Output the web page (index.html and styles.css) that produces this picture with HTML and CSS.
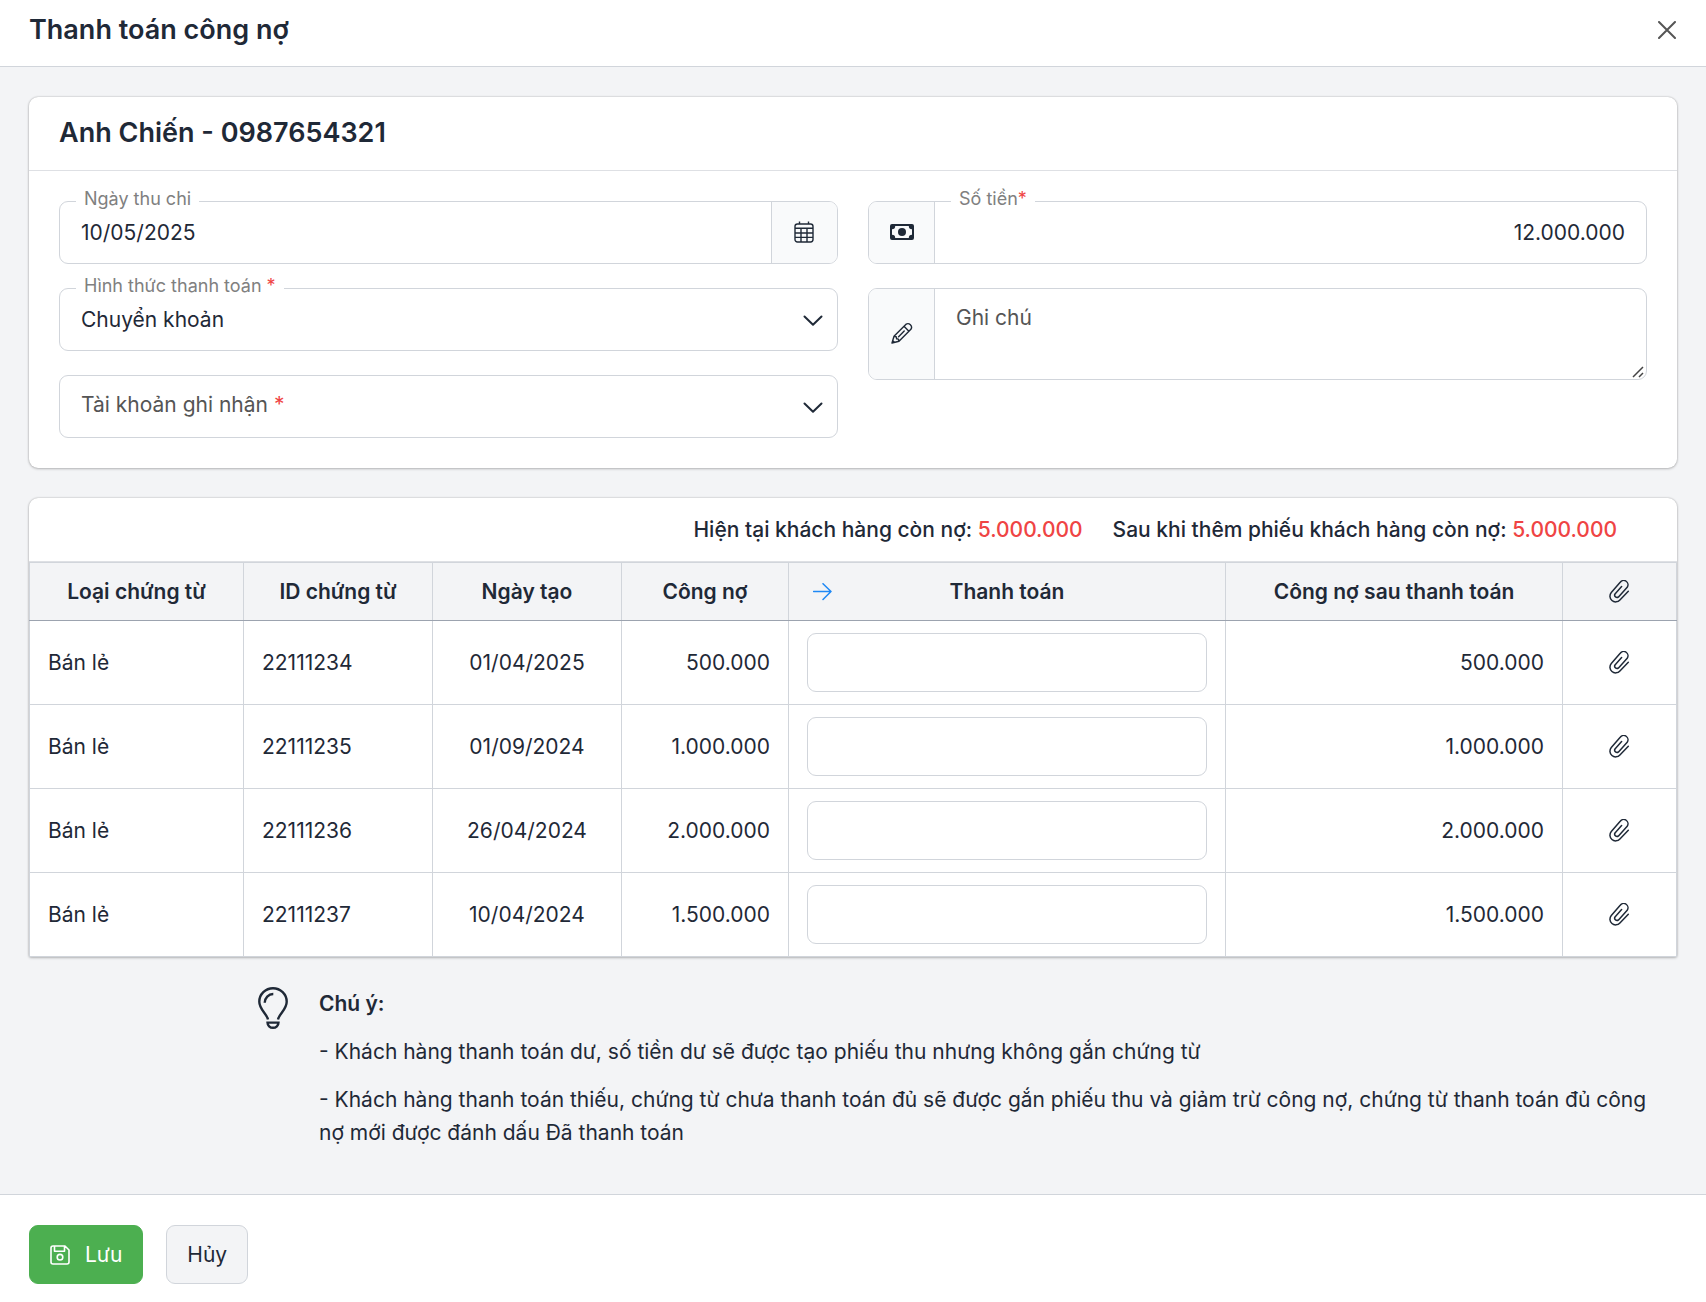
FILE: index.html
```html
<!DOCTYPE html>
<html lang="vi">
<head>
<meta charset="utf-8">
<meta name="viewport" content="width=device-width, initial-scale=1">
<title>Thanh toán công nợ</title>
<link rel="stylesheet" href="styles.css">
</head>
<body>
<svg class="sprite" aria-hidden="true">
  <symbol id="clip" viewBox="1 1 24 24">
    <path d="M21.3 12.3 12.9 20.9A5.6 5.6 0 0 1 4.3 13.6L13.2 3.3A4.1 4.1 0 0 1 20.2 8.2L11.5 17.9A2.3 2.3 0 0 1 8 15L14.6 7.6" fill="none" stroke="currentColor" stroke-width="1.5" stroke-linecap="round" stroke-linejoin="round"/>
  </symbol>
</svg>

<header class="topbar">
  <h1 class="topbar-title">Thanh toán công nợ</h1>
  <button class="icon-button close" type="button" aria-label="Đóng">
    <svg width="18" height="18" viewBox="0 0 18 18"><path d="M1 1 17 17M17 1 1 17" fill="none" stroke="currentColor" stroke-width="2" stroke-linecap="round"/></svg>
  </button>
</header>

<main class="content">
  <section class="card">
    <h2 class="card-title">Anh Chiến - 0987654321</h2>
    <div class="form">
      <div class="form-column">
        <div class="field">
          <label class="float-label" for="date">Ngày thu chi</label>
          <input class="control" id="date" type="text" value="10/05/2025">
          <button class="addon addon-end" type="button" aria-label="Chọn ngày">
            <svg width="20" height="22" viewBox="0 0 20 22" fill="none" stroke="currentColor" stroke-width="1.4"><rect x="1" y="3" width="18" height="18" rx="2.4"/><path d="M5.5 .4V3M14.5 .4V3M1 7.3H19M1 12H19M1 16.4H19M7 7.3V21M13 7.3V21"/></svg>
          </button>
        </div>
        <div class="field">
          <label class="float-label" for="method">Hình thức thanh toán <span class="required">*</span></label>
          <select class="control" id="method"><option>Chuyển khoản</option></select>
          <svg class="chevron" width="20" height="12" viewBox="0 0 20 12"><path d="M1.5 1.5 10 9.8 18.5 1.5" fill="none" stroke="currentColor" stroke-width="2" stroke-linecap="round" stroke-linejoin="round"/></svg>
        </div>
        <div class="field">
          <label class="inner-label" for="account">Tài khoản ghi nhận <span class="required">*</span></label>
          <select class="control" id="account"><option></option></select>
          <svg class="chevron" width="20" height="12" viewBox="0 0 20 12"><path d="M1.5 1.5 10 9.8 18.5 1.5" fill="none" stroke="currentColor" stroke-width="2" stroke-linecap="round" stroke-linejoin="round"/></svg>
        </div>
      </div>
      <div class="form-column">
        <div class="field">
          <span class="addon addon-start">
            <svg width="24" height="16" viewBox="0 0 24 16"><path fill="currentColor" fill-rule="evenodd" d="M2 0H22A2 2 0 0 1 24 2V14A2 2 0 0 1 22 16H2A2 2 0 0 1 0 14V2A2 2 0 0 1 2 0ZM5.2 2A3.2 3.2 0 0 1 2 5.2V10.8A3.2 3.2 0 0 1 5.2 14H18.8A3.2 3.2 0 0 1 22 10.8V5.2A3.2 3.2 0 0 1 18.8 2Z"/><circle cx="12" cy="8" r="4" fill="currentColor"/></svg>
          </span>
          <div class="field-main">
            <label class="float-label" for="amount">Số tiền<span class="required">*</span></label>
            <input class="control number" id="amount" type="text" value="12.000.000">
          </div>
        </div>
        <div class="field">
          <span class="addon addon-start">
            <svg width="22" height="22" viewBox="0 0 22 22" fill="none" stroke="currentColor" stroke-width="1.4" stroke-linejoin="round" stroke-linecap="round"><path d="M1 21 3 14.2 14.8 2.4A3.6 3.6 0 0 1 19.9 7.3L8 19.2ZM3 14.2 5.4 15 5.6 16.8 7.4 17.1 8 19.2M13 4.3 17.9 9.2M7.6 14.7 13.2 9.1M1 21 1.8 18.6 3.3 20.3Z"/></svg>
          </span>
          <textarea class="control note-input" placeholder="Ghi chú" aria-label="Ghi chú"></textarea>
          <svg class="grip" width="12" height="12" viewBox="0 0 12 12"><path d="M1 11 11 1M7 11 11 7" fill="none" stroke="#444" stroke-width="1.5"/></svg>
        </div>
      </div>
    </div>
  </section>

  <section class="card card-table">
    <div class="summary">
      <span>Hiện tại khách hàng còn nợ: <span class="debt">5.000.000</span></span>
      <span>Sau khi thêm phiếu khách hàng còn nợ: <span class="debt">5.000.000</span></span>
    </div>
    <table class="documents">
      <colgroup><col class="col-type"><col class="col-id"><col class="col-id"><col class="col-debt"><col class="col-pay"><col class="col-rest"><col class="col-file"></colgroup>
      <thead>
        <tr>
          <th>Loại chứng từ</th>
          <th>ID chứng từ</th>
          <th>Ngày tạo</th>
          <th>Công nợ</th>
          <th>
            <div class="pay-head">
              <button class="icon-button fill" type="button" aria-label="Điền tất cả">
                <svg width="20" height="18" viewBox="1 1 20 18"><path d="M1.5 9.500H19M11 1.700 19 9.500 11 17.500" fill="none" stroke="currentColor" stroke-width="1.5" stroke-linecap="round" stroke-linejoin="round"/></svg>
              </button>
              <span>Thanh toán</span>
            </div>
          </th>
          <th>Công nợ sau thanh toán</th>
          <th><svg class="clip" role="img" aria-label="Đính kèm"><use href="#clip"/></svg></th>
        </tr>
      </thead>
      <tbody>
        <tr>
          <td>Bán lẻ</td><td>22111234</td><td class="center">01/04/2025</td><td class="number">500.000</td>
          <td><input class="pay-input" type="text" aria-label="Thanh toán 22111234"></td>
          <td class="number">500.000</td>
          <td><button class="icon-button attach" type="button" aria-label="Đính kèm 22111234"><svg class="clip"><use href="#clip"/></svg></button></td>
        </tr>
        <tr>
          <td>Bán lẻ</td><td>22111235</td><td class="center">01/09/2024</td><td class="number">1.000.000</td>
          <td><input class="pay-input" type="text" aria-label="Thanh toán 22111235"></td>
          <td class="number">1.000.000</td>
          <td><button class="icon-button attach" type="button" aria-label="Đính kèm 22111235"><svg class="clip"><use href="#clip"/></svg></button></td>
        </tr>
        <tr>
          <td>Bán lẻ</td><td>22111236</td><td class="center">26/04/2024</td><td class="number">2.000.000</td>
          <td><input class="pay-input" type="text" aria-label="Thanh toán 22111236"></td>
          <td class="number">2.000.000</td>
          <td><button class="icon-button attach" type="button" aria-label="Đính kèm 22111236"><svg class="clip"><use href="#clip"/></svg></button></td>
        </tr>
        <tr>
          <td>Bán lẻ</td><td>22111237</td><td class="center">10/04/2024</td><td class="number">1.500.000</td>
          <td><input class="pay-input" type="text" aria-label="Thanh toán 22111237"></td>
          <td class="number">1.500.000</td>
          <td><button class="icon-button attach" type="button" aria-label="Đính kèm 22111237"><svg class="clip"><use href="#clip"/></svg></button></td>
        </tr>
      </tbody>
    </table>
  </section>

  <aside class="hint">
    <svg class="hint-icon" width="30" height="42" viewBox="0 0 30 42" fill="none" stroke="currentColor" stroke-width="2.4"><path d="M10 32.5C8.8 26.5 1.3 22.5 1.3 14.7A13.7 13.4 0 0 1 28.7 14.7C28.7 22.5 21.2 26.5 20 32.5M6.7 15.8A8.5 8.8 0 0 1 15.3 7M9.5 35.6H20.5A5.5 5.2 0 0 1 9.5 35.6Z"/></svg>
    <div class="hint-text">
      <p class="hint-title">Chú ý:</p>
      <p>- Khách hàng thanh toán dư, số tiền dư sẽ được tạo phiếu thu nhưng không gắn chứng từ</p>
      <p>- Khách hàng thanh toán thiếu, chứng từ chưa thanh toán đủ sẽ được gắn phiếu thu và giảm trừ công nợ, chứng từ thanh toán đủ công nợ mới được đánh dấu Đã thanh toán</p>
    </div>
  </aside>
</main>

<footer class="actions">
  <button class="button button-save" type="button">
    <svg width="20" height="20" viewBox="0 0 20 20" fill="none" stroke="currentColor" stroke-width="1.6" stroke-linejoin="round"><path d="M3 1H15L19 5V17A2 2 0 0 1 17 19H3A2 2 0 0 1 1 17V3A2 2 0 0 1 3 1ZM4.5 1V6.2H14.5V1"/><circle cx="10" cy="12.2" r="2.8"/></svg>
    Lưu
  </button>
  <button class="button button-cancel" type="button">Hủy</button>
</footer>
</body>
</html>
```
FILE: styles.css
```css
:root {
  --text: #1f2937;
  --line: #d1d5db;
  --surface: #f3f4f6;
  --danger: #ef4444;
}

* { box-sizing: border-box; }

body {
  margin: 0;
  background: #fff;
  color: var(--text);
  font: 400 21px/33px Inter, "Noto Sans", sans-serif;
}

h1, h2, p { margin: 0; }

button, input, select, textarea {
  font: inherit;
  color: inherit;
}

svg { display: block; flex: none; }

.sprite { display: none; }

.icon-button {
  display: flex;
  padding: 0;
  border: 0;
  background: none;
}

.topbar {
  display: flex;
  align-items: center;
  justify-content: space-between;
  padding: 12px 30px 18px 29px;
  border-bottom: 1px solid var(--line);
}

.topbar-title {
  font-size: 27px;
  font-weight: 600;
  line-height: 36px;
}

.close { color: #555; }

.content {
  display: flex;
  flex-direction: column;
  gap: 30px;
  padding: 30px 29px 45px;
  background: var(--surface);
}

.card {
  border-radius: 9px;
  background: #fff;
  box-shadow: 0 0 2px rgba(0, 0, 0, .25), 0 1px 3px rgba(0, 0, 0, .2);
}

.card-table { border-radius: 9px 9px 2px 2px; }

.card-title {
  padding: 18px 30px 19px;
  border-bottom: 1px solid #dee0e4;
  font-size: 27px;
  font-weight: 600;
  line-height: 36px;
}

.form {
  display: grid;
  grid-template-columns: 1fr 1fr;
  align-items: start;
  gap: 30px;
  padding: 30px;
}

.form-column {
  display: grid;
  gap: 24px;
}

.field {
  position: relative;
  display: flex;
  border: 1px solid var(--line);
  border-radius: 9px;
}

.field-main {
  position: relative;
  display: flex;
  flex: 1;
}

.control {
  flex: 1;
  min-width: 0;
  padding: 14px 21px;
  border: 0;
  border-radius: 9px;
  outline: 0;
  background: none;
  line-height: 33px;
  appearance: none;
}

select.control { height: 61px; }

.number { text-align: right; }

.note-input {
  height: 90px;
  padding-top: 12px;
  resize: vertical;
}

.note-input::placeholder { color: #555; }

.note-input::-webkit-resizer { background: none; }

.grip {
  position: absolute;
  right: 2px;
  bottom: 1px;
  pointer-events: none;
}

.float-label {
  position: absolute;
  top: -15px;
  left: 16px;
  padding: 0 8px;
  background: #fff;
  color: #808080;
  font-size: 18px;
  line-height: 24px;
}

.inner-label {
  position: absolute;
  top: 12px;
  left: 21px;
  color: #555;
  pointer-events: none;
}

.required, .debt { color: var(--danger); }

.addon {
  display: flex;
  align-items: center;
  justify-content: center;
  width: 66px;
  padding: 0 0 2px;
  border: 0;
  background: #f9fafb;
}

.addon-start {
  border-right: 1px solid var(--line);
  border-radius: 8px 0 0 8px;
}

.addon-end {
  padding-right: 2px;
  border-left: 1px solid var(--line);
  border-radius: 0 8px 8px 0;
}

.chevron {
  position: absolute;
  top: 26px;
  right: 14px;
  pointer-events: none;
}

.summary {
  display: flex;
  flex-wrap: wrap;
  justify-content: flex-end;
  gap: 30px;
  padding: 15px 60px;
  border-bottom: 1px solid #dee0e4;
  font-weight: 500;
}

.documents {
  width: 100%;
  border-collapse: collapse;
  table-layout: fixed;
}

.col-type { width: 13%; }
.col-id { width: 189px; }
.col-debt { width: 167px; }
.col-pay { width: 437px; }
.col-rest { width: 337px; }
.col-file { width: 114px; }

.documents th,
.documents td {
  padding: 12px 18px;
  border: 1px solid var(--line);
}

.documents th {
  border-bottom-color: #9ca3af;
  background: var(--surface);
  font-weight: 600;
}

.documents .center { text-align: center; }

.attach { margin: 0 auto; }

.pay-head {
  display: grid;
  grid-template-columns: 32px 1fr 32px;
  align-items: center;
}

.fill {
  justify-content: center;
  color: #1e88f5;
}

.pay-input {
  display: block;
  width: 100%;
  height: 59px;
  padding: 12px 18px;
  border: 1px solid var(--line);
  border-radius: 9px;
  text-align: right;
}

.clip {
  width: 24px;
  height: 24px;
  margin: 0 auto;
}

.hint {
  display: grid;
  grid-template-columns: 259px 1fr;
  gap: 31px;
  padding-right: 15px;
}

.hint-icon { justify-self: end; }

.hint-text {
  display: grid;
  gap: 15px;
}

.hint-title { font-weight: 600; }

.actions {
  display: flex;
  gap: 23px;
  padding: 30px 29px 18px;
  border-top: 1px solid var(--line);
}

.button {
  display: flex;
  align-items: center;
  gap: 15px;
  padding: 12px 20px;
  border: 1px solid var(--line);
  border-radius: 9px;
}

.button-save {
  border-color: #4caf50;
  background: #4caf50;
  color: #fff;
}

.button-cancel { background: var(--surface); }
```
